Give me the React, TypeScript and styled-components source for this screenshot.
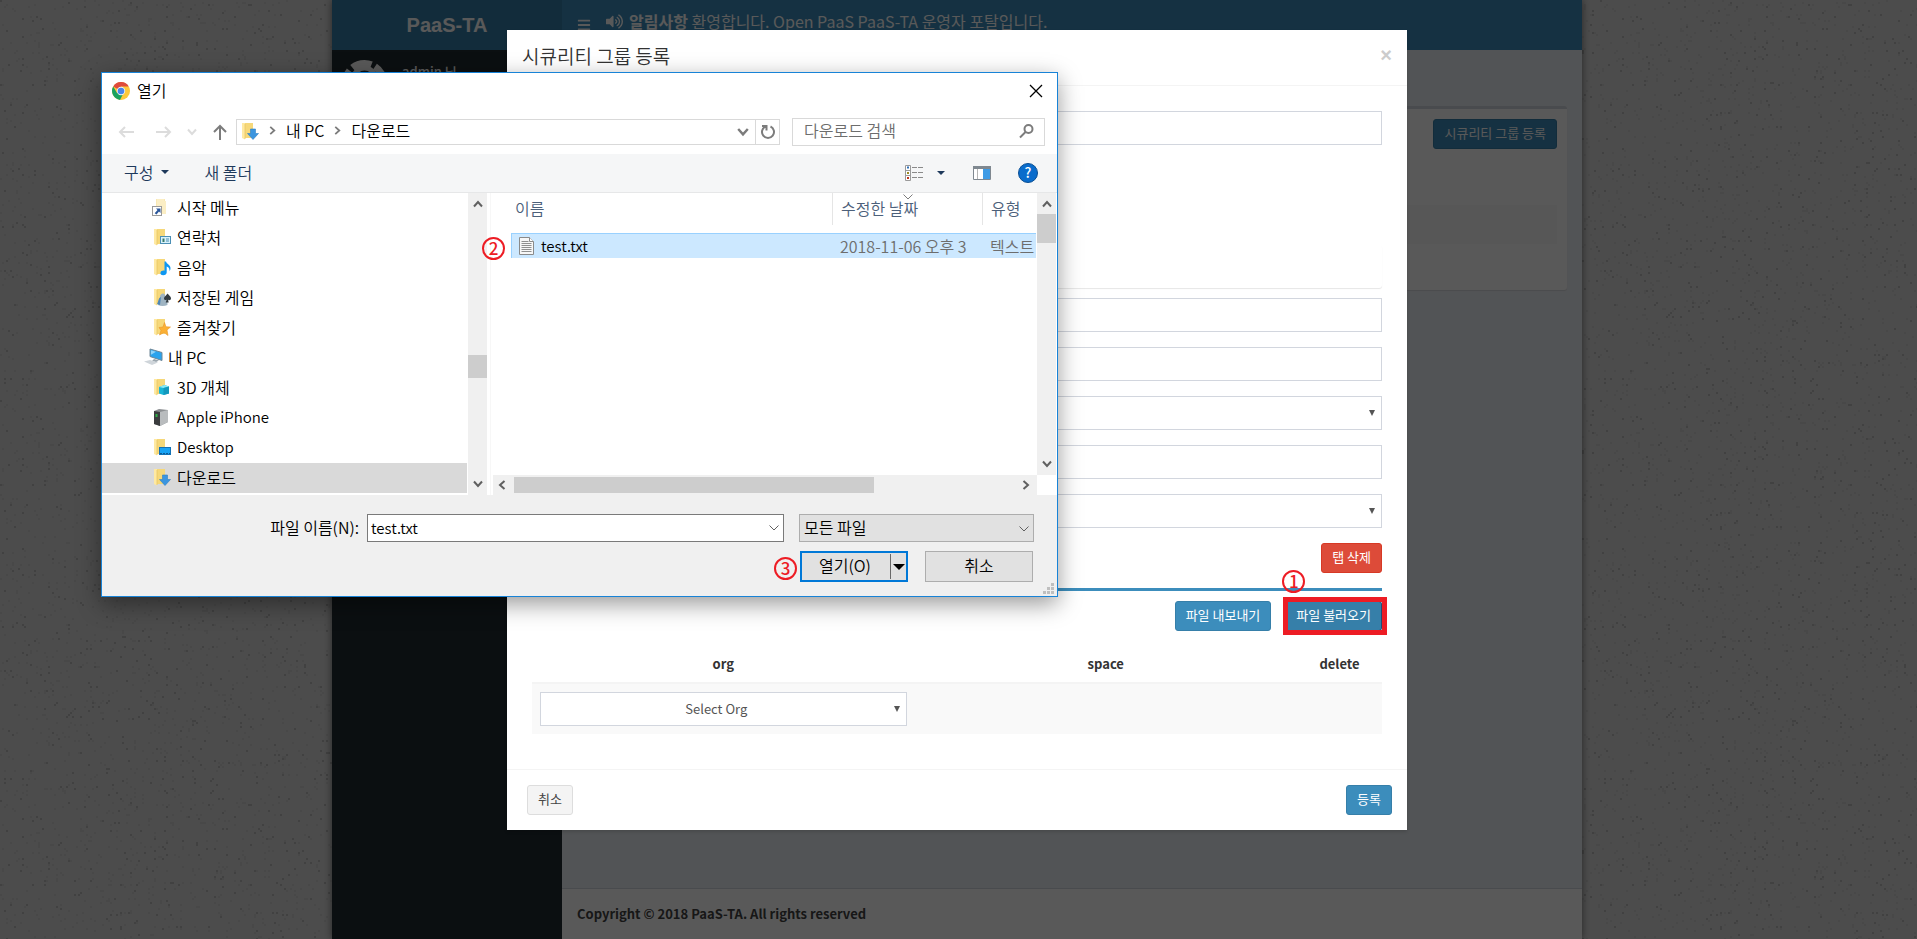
import React from "react";
import styled, { createGlobalStyle } from "styled-components";
import { FaBars, FaVolumeUp } from "react-icons/fa";

const uiFont = `"Noto Sans CJK KR", "Noto Sans", sans-serif`;

const GlobalStyle = createGlobalStyle`
  *, *::before, *::after { box-sizing: border-box; }
  body {
    margin: 0;
    background: #dbdbdb;
    font-family: ${uiFont};
    font-size: 13px;
    line-height: 20px;
    color: #333;
  }
  button, input, select { font: inherit; color: inherit; margin: 0; }
  button { cursor: pointer; }
`;

/* ---------- Admin portal ---------- */

const Screen = styled.div`
  position: relative;
  min-height: 100vh;
  padding-right: 3px;
  overflow: hidden;
`;

const Speckles = styled.svg`
  position: absolute;
  inset: 0;
  width: 100%;
  height: 100%;
`;

const Portal = styled.div`
  position: relative;
  display: flex;
  flex-direction: column;
  max-width: 1250px;
  min-height: 100vh;
  margin: 0 auto;
  background: #222d32;
  box-shadow: 0 0 8px rgba(0, 0, 0, 0.5);
`;

const TopBar = styled.header`
  display: flex;
  height: 50px;
  background: #3c8dbc;
  color: #fff;
`;

const Brand = styled.a`
  width: 230px;
  background: #367fa9;
  color: #fff;
  font: bold 20px/50px "Liberation Sans", sans-serif;
  text-align: center;
  text-decoration: none;
`;

const Notice = styled.div`
  display: flex;
  align-items: center;
  gap: 6px;
  height: 42px;
  padding-left: 15px;
  font-size: 16px;
`;

const MenuToggle = styled.button`
  display: flex;
  margin-right: 9px;
  padding: 7px 0 0;
  border: 0;
  background: none;
`;

const PortalMain = styled.div`
  display: flex;
  flex: 1;
`;

const SideBar = styled.aside`
  display: flex;
  gap: 15px;
  width: 230px;
  padding: 10px;
  color: #fff;
`;

const UserName = styled.span`
  font-weight: 500;
  line-height: 24px;
`;

const Content = styled.div`
  display: flex;
  flex: 1;
  flex-direction: column;
  background: #ecf0f5;
`;

const ContentBody = styled.main`
  flex: 1;
  padding: 56px 15px 15px;
`;

const Panel = styled.section`
  display: flex;
  flex-direction: column;
  align-items: flex-end;
  height: 184px;
  padding: 10px;
  border-top: 3px solid #d2d6de;
  border-radius: 3px;
  background: #fff;
  box-shadow: 0 1px 1px rgba(0, 0, 0, 0.1);
`;

const StripedRow = styled.div`
  align-self: stretch;
  height: 39px;
  margin-top: 56px;
  background: #f9f9f9;
`;

const PortalFooter = styled.footer`
  padding: 15px;
  border-top: 1px solid #d2d6de;
  background: #fff;
  color: #444;
  font-weight: 700;
`;

const Backdrop = styled.div`
  position: absolute;
  inset: 0;
  background: rgba(0, 0, 0, 0.65);
`;

const tones = {
  primary: ["#3c8dbc", "#367fa9", "#fff"],
  active: ["#367fa9", "#204d74", "#fff"],
  danger: ["#dd4b39", "#d73925", "#fff"],
  plain: ["#f4f4f4", "#ddd", "#444"],
};

const Btn = styled.button<{ $tone: keyof typeof tones }>`
  height: 30px;
  padding: 0 10px 2px;
  border: 1px solid ${(p) => tones[p.$tone][1]};
  border-radius: 3px;
  background: ${(p) => tones[p.$tone][0]};
  color: ${(p) => tones[p.$tone][2]};
  white-space: nowrap;
`;

/* ---------- Security group modal ---------- */

const ModalLayer = styled.div`
  position: absolute;
  inset: 0 3px 0 0;
  padding: 30px 0;
`;

const Modal = styled.section`
  max-width: 900px;
  margin: 0 auto;
  background: #fff;
  box-shadow: 0 2px 3px rgba(0, 0, 0, 0.13);
`;

const ModalHeader = styled.header`
  display: flex;
  justify-content: space-between;
  height: 56px;
  padding: 0 15px;
  border-bottom: 1px solid #f4f4f4;
`;

const ModalTitle = styled.h4`
  margin: 0;
  font-weight: 350;
  font-size: 19px;
  line-height: 52px;
`;

const CloseX = styled.button`
  align-self: flex-start;
  padding: 0;
  border: 0;
  background: none;
  color: #ccc;
  font: bold 20px/50px "Liberation Sans", sans-serif;
`;

const ModalBody = styled.div`
  padding: 25px 25px 35px;
`;

const TabCard = styled.div`
  height: 43px;
  margin: 100px 0 10px;
  border-radius: 3px;
  box-shadow: 0 1px 1px rgba(0, 0, 0, 0.1);
`;

const Fields = styled.div`
  display: flex;
  flex-direction: column;
  gap: 15px;
`;

const Field = styled.input`
  display: block;
  width: 100%;
  height: 34px;
  padding: 0 12px;
  border: 1px solid #d2d6de;
  border-radius: 0;
  background: #fff;
`;

const SelectBox = styled.div`
  position: relative;
`;

const FieldSelect = styled.select`
  display: block;
  width: 100%;
  height: 34px;
  padding: 0 26px 0 12px;
  border: 1px solid #d2d6de;
  border-radius: 0;
  background: #fff;
  color: #555;
  text-align: center;
  text-align-last: center;
  appearance: none;
`;

const SelectMark = styled.svg`
  position: absolute;
  top: 14px;
  right: 7px;
  pointer-events: none;
`;

const Actions = styled.div<{ $ruled?: boolean }>`
  display: flex;
  justify-content: flex-end;
  gap: 14px;
  ${(p) =>
    p.$ruled
      ? "margin-top: 15px; padding-top: 10px; border-top: 3px solid #3c8dbc;"
      : "margin-top: 15px;"}
`;

const Marked = styled.div`
  position: relative;
  display: flex;
`;

const MarkFrame = styled.div`
  position: absolute;
  inset: -4px -5px -4px -2px;
  border: 5px solid #ed1c24;
  pointer-events: none;
`;

const Step = styled.span<{ $left: number; $top: number }>`
  position: absolute;
  left: ${(p) => p.$left}px;
  top: ${(p) => p.$top}px;
  width: 23px;
  height: 23px;
  border: 2px solid #ed1c24;
  border-radius: 50%;
  color: #ed1c24;
  font-weight: 500;
  font-size: 17px;
  line-height: 18px;
  text-align: center;
`;

const OrgTable = styled.table`
  width: 100%;
  margin-top: 15px;
  border-collapse: separate;
  border-spacing: 0;
  table-layout: fixed;
  th {
    height: 38px;
    padding: 0;
    border-bottom: 2px solid #f4f4f4;
    font-weight: 700;
  }
  td {
    height: 50px;
    padding: 8px;
    background: #f9f9f9;
  }
`;

const ModalFooter = styled.footer`
  display: flex;
  justify-content: space-between;
  padding: 15px 15px 15px 20px;
  border-top: 1px solid #f4f4f4;
`;

/* ---------- File chooser ---------- */

const Dialog = styled.section`
  position: absolute;
  left: 101px;
  top: 72px;
  width: 957px;
  border: 1px solid #1883d7;
  background: #fff;
  box-shadow: 0 7px 22px rgba(0, 0, 0, 0.4);
  color: #000;
  font-weight: 350;
  font-size: 16px;
`;

const Latin = styled.span`
  font-size: 15px;
`;

const TitleBar = styled.header`
  display: flex;
  align-items: center;
  gap: 7px;
  height: 36px;
  padding: 0 14px 0 10px;
`;

const DialogTitle = styled.h2`
  flex: 1;
  margin: 0;
  padding-bottom: 2px;
  font-weight: 350;
  font-size: 16px;
`;

const IconButton = styled.button`
  display: flex;
  align-items: center;
  justify-content: center;
  padding: 0;
  border: 0;
  background: none;
`;

const NavRow = styled.nav`
  display: flex;
  align-items: center;
  height: 45px;
  padding: 0 12px 0 16px;
`;

const HistoryButtons = styled.div`
  display: flex;
  align-items: center;
  gap: 15px;
  margin-right: 8px;
  > :nth-child(2) { margin-left: 7px; }
`;

const AddressBar = styled.div`
  display: flex;
  flex: 1;
  align-items: center;
  height: 26px;
  padding-left: 3px;
  border: 1px solid #d9d9d9;
`;

const Crumb = styled.span`
  display: flex;
  align-items: center;
  gap: 9px;
  margin-left: 9px;
  padding-bottom: 3px;
`;

const AddressTools = styled.div`
  display: flex;
  height: 24px;
  margin-left: auto;
`;

const AddressTool = styled(IconButton)<{ $ruled?: boolean }>`
  width: 24px;
  border-left: ${(p) => (p.$ruled ? "1px solid #d9d9d9" : "0")};
`;

const SearchBox = styled.label`
  display: flex;
  align-items: center;
  width: 253px;
  height: 28px;
  margin-left: 12px;
  padding: 0 10px 0 11px;
  border: 1px solid #d9d9d9;
`;

const SearchInput = styled.input`
  flex: 1;
  min-width: 0;
  height: 24px;
  padding: 0 0 3px;
  border: 0;
  outline: 0;
  &::placeholder { color: #6d6d6d; opacity: 1; }
`;

const ToolBar = styled.div`
  display: flex;
  align-items: center;
  height: 39px;
  padding: 0 19px 0 22px;
  border-bottom: 1px solid #e6e7e8;
  background: #f5f6f7;
  color: #1e395b;
`;

const ToolText = styled(IconButton)`
  gap: 8px;
  margin-right: 35px;
  padding-bottom: 2px;
`;

const ViewTools = styled.div`
  display: flex;
  align-items: center;
  margin-left: auto;
  > :nth-child(2) { margin: 0 28px 0 14px; }
  > :nth-child(4) { margin-left: 27px; }
`;

const Panes = styled.div`
  display: flex;
  height: 302px;
`;

const Tree = styled.ul`
  flex: none;
  width: 366px;
  margin: 0;
  padding: 0;
  list-style: none;
`;

const TreeItem = styled.li<{ $root?: boolean; $selected?: boolean }>`
  display: flex;
  align-items: center;
  gap: ${(p) => (p.$root ? 5 : 6)}px;
  height: 30px;
  margin-right: 1px;
  padding: 0 0 2px ${(p) => (p.$root ? 41 : 50)}px;
  background: ${(p) => (p.$selected ? "#d9d9d9" : "transparent")};
  white-space: nowrap;
`;

const VScroll = styled.div`
  display: flex;
  flex: none;
  flex-direction: column;
  align-items: center;
  justify-content: space-between;
  position: relative;
  width: 19px;
  padding: 6px 0;
  background: #f0f0f0;
`;

const Thumb = styled.div<{ $top: number; $size: number }>`
  position: absolute;
  left: 0;
  right: 0;
  top: ${(p) => p.$top}px;
  height: ${(p) => p.$size}px;
  background: #cdcdcd;
`;

const FilePane = styled.div`
  display: flex;
  flex: 1;
  flex-direction: column;
  min-width: 0;
  margin-left: 3px;
  border-left: 1px solid #f7f7f7;
`;

const FileArea = styled.div`
  display: flex;
  flex: 1;
  padding-right: 1px;
`;

const FileListBox = styled.div`
  flex: 1;
  min-width: 0;
  margin-right: 1px;
  padding-left: 20px;
  overflow: hidden;
`;

const FileTable = styled.table`
  width: 100%;
  border-collapse: separate;
  border-spacing: 0;
  table-layout: fixed;
  text-align: left;
  white-space: nowrap;
  th {
    height: 40px;
    padding: 0;
    color: #4c607a;
    font-weight: 350;
    vertical-align: top;
  }
  td {
    height: 25px;
    padding: 0 0 0 8px;
    border-top: 1px solid #99d1ff;
    background: #cce8ff;
    color: #6d6d6d;
    line-height: 24px;
    overflow: hidden;
  }
  td:first-child {
    padding-left: 7px;
    border-left: 1px solid #99d1ff;
  }
`;

const ColumnHead = styled.div<{ $first?: boolean }>`
  position: relative;
  height: 32px;
  padding-left: ${(p) => (p.$first ? 4 : 8)}px;
  border-left: ${(p) => (p.$first ? "0" : "1px solid #e5e5e5")};
  line-height: 30px;
`;

const SortMark = styled.svg`
  position: absolute;
  top: 1px;
  left: 70px;
`;

const FileName = styled.span`
  display: flex;
  align-items: center;
  gap: 7px;
  color: #000;
`;

const HScroll = styled.div`
  display: flex;
  align-items: center;
  height: 20px;
  margin: 0 20px 0 2px;
  padding: 0 6px 0 4px;
  background: #f0f0f0;
`;

const HTrack = styled.div`
  flex: 1;
  padding: 0 7px;
`;

const HThumb = styled.div`
  width: 72%;
  height: 16px;
  background: #cdcdcd;
`;

const DialogFooter = styled.footer`
  display: grid;
  grid-template-columns: 1fr 235px;
  gap: 9px 15px;
  padding: 19px 23px 14px 0;
  background: #f0f0f0;
`;

const NameField = styled.div`
  display: flex;
  align-items: center;
  justify-content: flex-end;
  gap: 8px;
`;

const NameLabel = styled.label`
  padding-bottom: 2px;
`;

const ComboBox = styled.div`
  display: flex;
  width: 417px;
  height: 28px;
  padding: 0 4px 0 3px;
  border: 1px solid #7a7a7a;
  background: #fff;
`;

const ComboInput = styled.input`
  flex: 1;
  padding: 0;
  border: 0;
  outline: 0;
  font-size: 15px;
`;

const TypeSelect = styled.select`
  display: block;
  width: 100%;
  height: 28px;
  padding: 0 24px 2px 4px;
  border: 1px solid #adadad;
  border-radius: 0;
  background: #e1e1e1;
  appearance: none;
`;

const TypeMark = styled.svg`
  position: absolute;
  top: 12px;
  right: 5px;
  pointer-events: none;
`;

const FooterButtons = styled.div`
  display: flex;
  grid-column: 2;
  justify-content: space-between;
  padding: 0 1px;
`;

const SplitButton = styled.div`
  display: flex;
  width: 108px;
  height: 31px;
  border: 2px solid #0078d7;
  background: #e1e1e1;
`;

const SplitMain = styled.button`
  flex: 1;
  padding: 0 2px 4px 0;
  border: 0;
  background: none;
`;

const SplitArrow = styled.button`
  display: flex;
  align-items: center;
  justify-content: center;
  width: 16px;
  margin: 1px 0;
  padding: 0;
  border: 0;
  border-left: 1px solid #696969;
  background: none;
`;

const CancelButton = styled.button`
  width: 108px;
  height: 31px;
  padding: 0 0 4px;
  border: 1px solid #adadad;
  background: #e1e1e1;
`;

const Grip = styled.svg`
  position: absolute;
  right: 3px;
  bottom: 2px;
`;

/* ---------- Drawings ---------- */

const speckle = (count: number, start: number) => {
  let seed = start;
  const next = () => (seed = (seed * 16807) % 2147483647) / 2147483647;
  let d = "";
  for (let i = 0; i < count; i++) {
    d += `M${Math.floor(next() * 200) * 2} ${Math.floor(next() * 200) * 2}h2v2h-2z`;
  }
  return d;
};
const darkDots = speckle(650, 4217);
const softDots = speckle(1500, 977);

const Texture = () => (
  <Speckles aria-hidden="true">
    <defs>
      <pattern id="grain" width="400" height="400" patternUnits="userSpaceOnUse">
        <path d={softDots} fill="#cfcfcf" />
        <path d={darkDots} fill="#b9b9b9" />
      </pattern>
    </defs>
    <rect width="100%" height="100%" fill="url(#grain)" />
  </Speckles>
);

const Chevron = ({ dir, size = 10, stroke = 2, color = "#606060" }: { dir: "up" | "down" | "left" | "right"; size?: number; stroke?: number; color?: string }) => {
  const paths = {
    up: "M1 7.5 5 3l4 4.5",
    down: "M1 2.5 5 7l4-4.5",
    left: "M7.500 1 3 5l4.500 4",
    right: "M2.500 1 7 5l-4.500 4",
  };
  return (
    <svg width={size} height={size} viewBox="0 0 10 10" fill="none" stroke={color} strokeWidth={stroke} aria-hidden="true">
      <path d={paths[dir]} />
    </svg>
  );
};

const Triangle = ({ w = 8, h = 4, color = "#1e395b" }) => (
  <svg width={w} height={h} viewBox="0 0 8 4" preserveAspectRatio="none" aria-hidden="true">
    <path d="M0 0h8L4 4z" fill={color} />
  </svg>
);

const overlays: Record<string, React.ReactNode> = {
  shortcut: (
    <>
      <rect x="-.5" y="8.500" width="9" height="9" fill="#fff" stroke="#9a9a9a" />
      <path d="M3 10.500h4.500V15L6 13.500l-2.500 3-1.800-1.200 2.800-3.300z" fill="#2b579a" />
    </>
  ),
  contact: (
    <>
      <rect x="7.500" y="8.500" width="10" height="7" fill="#d8f1fb" stroke="#4b8fb5" />
      <path d="M9.500 10.500h2v3.500h-2z" fill="#3a7a68" />
      <path d="M13 11h3M13 13h3" stroke="#4b8fb5" />
    </>
  ),
  music: <path d="M11.500 3.500h1.500c.5 2.500 4.500 3.500 4.500 6.500 0 1.500-.5 2.500-1 3 .3-3-1.500-4-2.800-4.500v6c0 1.500-1.500 2.800-3.500 2.800S7 16 7.500 14.500s2-2.200 4-1.800z" fill="#0c97f2" />,
  game: (
    <>
      <path d="M5 17c0-5 2-5 2-8 0-2 1.500-3.500 3-3.500S12.500 7 12 9c2 2 2.500 5 2.500 8-3 1.200-7 1.200-9.500 0z" fill="#9fb4c2" />
      <path d="M4 16c2-3 1-6 4-7l-1 8z" fill="#4f86b5" />
      <path d="M14.500 5.500c1.500 2 3.500 2.800 3.500 5 0 2-2.500 2-3 1l.7 3h-3l1-3c-1 1-2.700.5-2.700-1 0-2.200 2.500-3 3.500-5z" fill="#333b40" />
    </>
  ),
  star: <path d="m11.500 4.500 1.500 4.300 4.500.2-3.500 3 1 5.500-4-3-4.500 2.500 1.500-4.500L6 9.500l4-.5z" fill="#fbb034" stroke="#e8962a" strokeWidth=".6" />,
  cube: (
    <>
      <path d="m6 9 5.500-2L16 8.500v7L10.500 17 6 15.500z" fill="#19b5d6" />
      <path d="m6 9 5.500-2L16 8.500 10.500 10z" fill="#8be9f5" />
      <path d="M10.500 10 16 8.500v7L10.500 17z" fill="#1398bd" />
    </>
  ),
  desktop: (
    <>
      <rect x="6.500" y="9.500" width="11" height="7" fill="#18a3f5" stroke="#1372b5" />
      <path d="M7 15.500h10" stroke="#0e5a94" strokeDasharray="2 1" />
    </>
  ),
  download: <path d="M9.500 7h5v4.500h3L12 17.500 6.500 11.500h3z" fill="#3b95df" stroke="#2d7fc4" strokeWidth=".6" />,
};

const Folder = ({ kind }: { kind: string }) => (
  <svg width="19" height="19" viewBox="-1 0 19 19" overflow="visible" aria-hidden="true">
    <path d="M3 1h9v15H3z" fill={kind === "shortcut" ? "#f8e8b4" : "#f6d87a"} />
    <path d={kind === "shortcut" ? "M4 1h7v2h2v13H4z" : "M1 1h3v16.500L1 16z"} fill={kind === "shortcut" ? "#fbeec5" : "#ffe9a2"} />
    {kind !== "shortcut" && <path d="M4 2v15" stroke="#e9c662" strokeWidth=".8" />}
    {overlays[kind]}
  </svg>
);

const PcIcon = () => (
  <svg width="20" height="18" viewBox="0 0 20 18" aria-hidden="true">
    <path d="m7 1 12 3.500v8L7 8.500z" fill="#2aa3ee" stroke="#6f8797" />
    <path d="m8 2.300 5 1.500-5 3z" fill="#8fd3fa" />
    <path d="m11 11 5 1.500-3 1.500-4-1z" fill="#9aa5ad" />
    <path d="m1 13.500 6-1.500 8 2.500L9 17z" fill="#cfd5da" />
  </svg>
);

const PhoneIcon = () => (
  <svg width="19" height="19" viewBox="-1 0 19 19" aria-hidden="true">
    <path d="m1 3 5-2 9 1v12l-8 4-6-2z" fill="#8c8f92" />
    <path d="m7 4 8-2v12l-8 4z" fill="#b9bcbe" />
    <path d="M1 3l6 1v14l-6-2z" fill="#3a3c3e" />
    <path d="M2.500 6h2v3h-2z" fill="#2fae48" />
  </svg>
);

const ChromeIcon = () => (
  <svg width="18" height="18" viewBox="0 0 18 18" aria-hidden="true">
    <circle cx="9" cy="9" r="9" fill="#fdc93b" />
    <path d="M9 9 1.200 4.500A9 9 0 0 1 16.800 4.500H9z" fill="#df4b3d" />
    <path d="M1.200 4.500A9 9 0 0 0 8 17.900L11.500 11 9 9 5 11z" fill="#1aa260" />
    <circle cx="9" cy="9" r="4.200" fill="#f3f3f3" />
    <circle cx="9" cy="9" r="3.300" fill="#4a86e8" />
  </svg>
);

const Arrow = ({ dir, color }: { dir: "left" | "right" | "up"; color: string }) => (
  <svg width="16" height="16" viewBox="0 0 16 16" fill="none" stroke={color} strokeWidth="2" aria-hidden="true">
    {dir === "left" && <path d="M16 8H2M7 3 2 8l5 5" />}
    {dir === "right" && <path d="M0 8h14M9 3l5 5-5 5" />}
    {dir === "up" && <path d="M8 16V2M2 8l6-6 6 6" />}
  </svg>
);

const DocIcon = () => (
  <svg width="15" height="18" viewBox="0 0 15 18" aria-hidden="true">
    <path d="M.5.5h10l4 4v13H.5z" fill="#f7f7f7" stroke="#8a8a8a" />
    <path d="M10.500.5v4h4" fill="#fff" stroke="#8a8a8a" />
    <path d="M2.500 4.500h7M2.500 6.500h10M2.500 8.500h10M2.500 10.500h10M2.500 12.500h10M2.500 14.500h10" stroke="#8f8f8f" />
  </svg>
);

const Avatar = () => (
  <svg width="45" height="45" viewBox="0 0 45 45" aria-hidden="true">
    <circle cx="22.500" cy="22.500" r="19" fill="none" stroke="#fff" strokeWidth="7" strokeDasharray="20 4" strokeDashoffset="-4" />
    <circle cx="22.500" cy="19" r="11" fill="none" stroke="#fff" strokeWidth="5" />
  </svg>
);

const DownMark = () => (
  <SelectMark width="6" height="6" viewBox="0 0 6 6" aria-hidden="true">
    <path d="M0 0h6L3 6z" fill="#555" />
  </SelectMark>
);

const treeItems = [
  { name: "시작 메뉴", kind: "shortcut" },
  { name: "연락처", kind: "contact" },
  { name: "음악", kind: "music" },
  { name: "저장된 게임", kind: "game" },
  { name: "즐겨찾기", kind: "star" },
  { name: "내 PC", kind: "pc" },
  { name: "3D 개체", kind: "cube" },
  { name: "Apple iPhone", kind: "phone" },
  { name: "Desktop", kind: "desktop" },
  { name: "다운로드", kind: "download" },
];

const PortalPage = () => (
  <Portal>
    <TopBar>
      <Brand href="#">PaaS-TA</Brand>
      <Notice>
        <MenuToggle aria-label="메뉴"><FaBars size={14} /></MenuToggle>
        <FaVolumeUp size={17} />
        <span><b>알림사항</b> 환영합니다. Open PaaS PaaS-TA 운영자 포탈입니다.</span>
      </Notice>
    </TopBar>
    <PortalMain>
      <SideBar>
        <Avatar />
        <UserName>admin 님</UserName>
      </SideBar>
      <Content>
        <ContentBody>
          <Panel>
            <Btn $tone="primary">시큐리티 그룹 등록</Btn>
            <StripedRow />
          </Panel>
        </ContentBody>
        <PortalFooter>Copyright © 2018 PaaS-TA. All rights reserved</PortalFooter>
      </Content>
    </PortalMain>
  </Portal>
);

const SecurityGroupModal = () => (
  <ModalLayer>
    <Modal role="dialog" aria-labelledby="group-title">
      <ModalHeader>
        <ModalTitle id="group-title">시큐리티 그룹 등록</ModalTitle>
        <CloseX aria-label="닫기">×</CloseX>
      </ModalHeader>
      <ModalBody>
        <Field aria-label="이름" />
        <TabCard />
        <Fields>
          <Field aria-label="설명" />
          <Field aria-label="대상" />
          <SelectBox><FieldSelect aria-label="프로토콜" /><DownMark /></SelectBox>
          <Field aria-label="포트" />
          <SelectBox><FieldSelect aria-label="로그" /><DownMark /></SelectBox>
        </Fields>
        <Actions><Btn $tone="danger">탭 삭제</Btn></Actions>
        <Actions $ruled>
          <Btn $tone="primary">파일 내보내기</Btn>
          <Marked>
            <Btn $tone="active">파일 불러오기</Btn>
            <MarkFrame />
            <Step $left={-3} $top={-31}>1</Step>
          </Marked>
        </Actions>
        <OrgTable>
          <colgroup><col width="45%" /><col width="45%" /><col width="10%" /></colgroup>
          <thead><tr><th>org</th><th>space</th><th>delete</th></tr></thead>
          <tbody>
            <tr>
              <td>
                <SelectBox>
                  <FieldSelect aria-label="org"><option>Select Org</option></FieldSelect>
                  <DownMark />
                </SelectBox>
              </td>
              <td />
              <td />
            </tr>
          </tbody>
        </OrgTable>
      </ModalBody>
      <ModalFooter>
        <Btn $tone="plain">취소</Btn>
        <Btn $tone="primary">등록</Btn>
      </ModalFooter>
    </Modal>
  </ModalLayer>
);

const FileDialog = () => (
  <Dialog role="dialog" aria-labelledby="open-title">
    <TitleBar>
      <ChromeIcon />
      <DialogTitle id="open-title">열기</DialogTitle>
      <IconButton aria-label="닫기">
        <svg width="14" height="14" viewBox="0 0 14 14" stroke="#000" strokeWidth="1.300" aria-hidden="true">
          <path d="m1 1 12 12M13 1 1 13" />
        </svg>
      </IconButton>
    </TitleBar>
    <NavRow>
      <HistoryButtons>
        <IconButton aria-label="뒤로"><Arrow dir="left" color="#dcdcdc" /></IconButton>
        <IconButton aria-label="앞으로"><Arrow dir="right" color="#dcdcdc" /></IconButton>
        <IconButton aria-label="최근 위치"><Chevron dir="down" color="#dcdcdc" /></IconButton>
        <IconButton aria-label="위로"><Arrow dir="up" color="#7c7c7c" /></IconButton>
      </HistoryButtons>
      <AddressBar>
        <Folder kind="download" />
        <Crumb><Chevron dir="right" size={9} color="#7c7c7c" />내 PC</Crumb>
        <Crumb><Chevron dir="right" size={9} color="#7c7c7c" />다운로드</Crumb>
        <AddressTools>
          <AddressTool aria-label="이전 위치"><Chevron dir="down" size={12} color="#7c7c7c" /></AddressTool>
          <AddressTool $ruled aria-label="새로 고침">
            <svg width="16" height="16" viewBox="0 0 16 16" fill="none" stroke="#7c7c7c" strokeWidth="2" aria-hidden="true">
              <path d="M10.500 2.500a6 6 0 1 1-5 0M2 2h4.500v4.500" />
            </svg>
          </AddressTool>
        </AddressTools>
      </AddressBar>
      <SearchBox>
        <SearchInput placeholder="다운로드 검색" aria-label="다운로드 검색" />
        <svg width="15" height="15" viewBox="0 0 15 15" fill="none" stroke="#7c7c7c" strokeWidth="2" aria-hidden="true">
          <circle cx="9.500" cy="5" r="4" />
          <path d="M6.500 8 1 13.500" />
        </svg>
      </SearchBox>
    </NavRow>
    <ToolBar>
      <ToolText>구성<Triangle /></ToolText>
      <ToolText>새 폴더</ToolText>
      <ViewTools>
        <IconButton aria-label="보기">
          <svg width="18" height="16" viewBox="0 0 18 16" fill="none" stroke="#9a9a9a" aria-hidden="true">
            <path d="M.5.500h5v15h-5zM.5 5.500h5M.5 10.500h5" fill="#fff" />
            <path d="M7 2.500h11M7 7.500h11M7 12.500h11" stroke="#8a8a8a" strokeDasharray="5 1" />
            <path d="M2 2.500h2" stroke="#2f6fb5" strokeWidth="2" />
            <path d="M2 8h2" stroke="#9a8a20" strokeWidth="2" />
            <path d="M2 13h2" stroke="#c0341a" strokeWidth="2" />
          </svg>
        </IconButton>
        <IconButton aria-label="보기 옵션"><Triangle /></IconButton>
        <IconButton aria-label="미리 보기 창">
          <svg width="18" height="14" viewBox="0 0 18 14" aria-hidden="true">
            <path d="M.5.500h17v13H.5z" fill="#fff" stroke="#7f8890" />
            <path d="M0 0h18v3H0z" fill="#7f8890" />
            <path d="M4.500 3v10" stroke="#b5b5b5" />
            <path d="M10 3h7v10h-7z" fill="#3f9be5" />
          </svg>
        </IconButton>
        <IconButton aria-label="도움말">
          <svg width="20" height="20" viewBox="0 0 20 20" aria-hidden="true">
            <circle cx="10" cy="10" r="9.500" fill="#0a6ccc" stroke="#0a4f94" />
            <text x="10" y="15" textAnchor="middle" fontSize="14" fontWeight="500" fill="#fff">?</text>
          </svg>
        </IconButton>
      </ViewTools>
    </ToolBar>
    <Panes>
      <Tree>
        {treeItems.map(({ name, kind }) => (
          <TreeItem key={name} $root={kind === "pc"} $selected={kind === "download"}>
            {kind === "pc" ? <PcIcon /> : kind === "phone" ? <PhoneIcon /> : <Folder kind={kind} />}
            {/^[\x20-\x7e]+$/.test(name) ? <Latin>{name}</Latin> : name}
          </TreeItem>
        ))}
      </Tree>
      <VScroll>
        <Chevron dir="up" />
        <Thumb $top={162} $size={23} />
        <Chevron dir="down" />
      </VScroll>
      <FilePane>
        <FileArea>
          <FileListBox>
            <FileTable>
              <colgroup><col /><col width="150" /><col width="54" /></colgroup>
              <thead>
                <tr>
                  <th><ColumnHead $first>이름</ColumnHead></th>
                  <th>
                    <ColumnHead>
                      수정한 날짜
                      <SortMark width="10" height="6" viewBox="0 0 10 6" fill="none" stroke="#7c7c7c" aria-hidden="true">
                        <path d="m.5.500 4.500 4.500L9.500.500" />
                      </SortMark>
                    </ColumnHead>
                  </th>
                  <th><ColumnHead>유형</ColumnHead></th>
                </tr>
              </thead>
              <tbody>
                <tr>
                  <td><FileName><DocIcon /><Latin>test.txt</Latin></FileName></td>
                  <td>2018-11-06 오후 3</td>
                  <td>텍스트</td>
                </tr>
              </tbody>
            </FileTable>
          </FileListBox>
          <VScroll>
            <Chevron dir="up" />
            <Thumb $top={21} $size={29} />
            <Chevron dir="down" />
          </VScroll>
        </FileArea>
        <HScroll>
          <Chevron dir="left" />
          <HTrack><HThumb /></HTrack>
          <Chevron dir="right" />
        </HScroll>
      </FilePane>
    </Panes>
    <DialogFooter>
      <NameField>
        <NameLabel htmlFor="file-name">파일 이름(N):</NameLabel>
        <ComboBox>
          <ComboInput id="file-name" defaultValue="test.txt" />
          <IconButton aria-label="파일 이름 목록">
            <svg width="10" height="6" viewBox="0 0 10 6" fill="none" stroke="#606060" aria-hidden="true">
              <path d="m.5.500 4.500 4.500L9.500.500" />
            </svg>
          </IconButton>
        </ComboBox>
      </NameField>
      <SelectBox>
        <TypeSelect aria-label="파일 형식"><option>모든 파일</option></TypeSelect>
        <TypeMark width="10" height="6" viewBox="0 0 10 6" fill="none" stroke="#606060" aria-hidden="true">
          <path d="m.5.500 4.500 4.500L9.500.500" />
        </TypeMark>
      </SelectBox>
      <FooterButtons>
        <SplitButton>
          <SplitMain>열기(O)</SplitMain>
          <SplitArrow aria-label="열기 옵션"><Triangle w={12} h={6} color="#000" /></SplitArrow>
        </SplitButton>
        <CancelButton>취소</CancelButton>
      </FooterButtons>
    </DialogFooter>
    <Grip width="11" height="11" viewBox="0 0 11 11" fill="#bfbfbf" aria-hidden="true">
      <path d="M8 0h3v3H8zM4 4h3v3H4zM8 4h3v3H8zM0 8h3v3H0zM4 8h3v3H4zM8 8h3v3H8z" />
    </Grip>
    <Step $left={380} $top={164}>2</Step>
    <Step $left={672} $top={484}>3</Step>
  </Dialog>
);

export default function App() {
  return (
    <Screen>
      <GlobalStyle />
      <Texture />
      <PortalPage />
      <Backdrop />
      <SecurityGroupModal />
      <FileDialog />
    </Screen>
  );
}
